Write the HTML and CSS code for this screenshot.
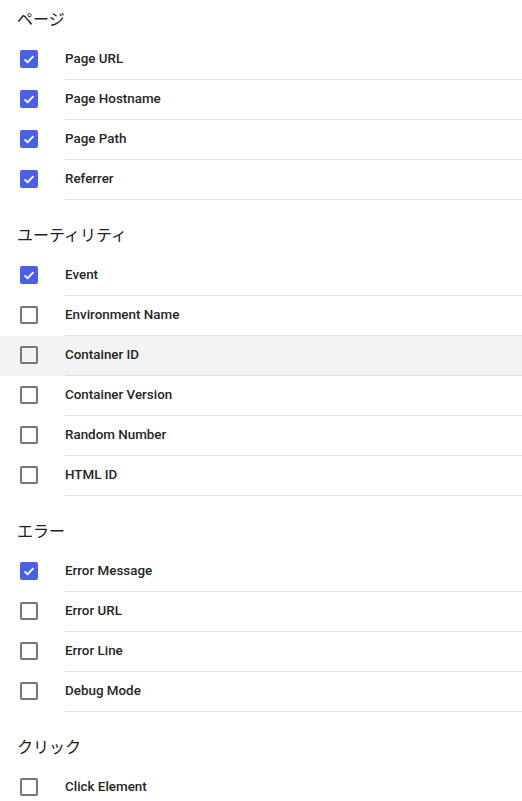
FILE: index.html
```html
<!DOCTYPE html>
<html lang="ja">
<head>
<meta charset="utf-8">
<link rel="stylesheet" href="styles.css">
</head>
<body>
<div class="list">
  <section class="group">
    <h2 class="group-title">ページ</h2>
    <div class="row"><span class="cb checked"><svg viewBox="0 0 18 18"><polyline points="4.5,9.3 7.6,12.2 13.5,6.2"/></svg></span><span class="label">Page URL</span></div>
    <div class="row"><span class="cb checked"><svg viewBox="0 0 18 18"><polyline points="4.5,9.3 7.6,12.2 13.5,6.2"/></svg></span><span class="label">Page Hostname</span></div>
    <div class="row"><span class="cb checked"><svg viewBox="0 0 18 18"><polyline points="4.5,9.3 7.6,12.2 13.5,6.2"/></svg></span><span class="label">Page Path</span></div>
    <div class="row"><span class="cb checked"><svg viewBox="0 0 18 18"><polyline points="4.5,9.3 7.6,12.2 13.5,6.2"/></svg></span><span class="label">Referrer</span></div>
  </section>
  <section class="group">
    <h2 class="group-title">ユーティリティ</h2>
    <div class="row"><span class="cb checked"><svg viewBox="0 0 18 18"><polyline points="4.5,9.3 7.6,12.2 13.5,6.2"/></svg></span><span class="label">Event</span></div>
    <div class="row"><span class="cb"></span><span class="label">Environment Name</span></div>
    <div class="row hover"><span class="cb"></span><span class="label">Container ID</span></div>
    <div class="row"><span class="cb"></span><span class="label">Container Version</span></div>
    <div class="row"><span class="cb"></span><span class="label">Random Number</span></div>
    <div class="row"><span class="cb"></span><span class="label">HTML ID</span></div>
  </section>
  <section class="group">
    <h2 class="group-title">エラー</h2>
    <div class="row"><span class="cb checked"><svg viewBox="0 0 18 18"><polyline points="4.5,9.3 7.6,12.2 13.5,6.2"/></svg></span><span class="label">Error Message</span></div>
    <div class="row"><span class="cb"></span><span class="label">Error URL</span></div>
    <div class="row"><span class="cb"></span><span class="label">Error Line</span></div>
    <div class="row"><span class="cb"></span><span class="label">Debug Mode</span></div>
  </section>
  <section class="group">
    <h2 class="group-title">クリック</h2>
    <div class="row"><span class="cb"></span><span class="label">Click Element</span></div>
  </section>
</div>
</body>
</html>
```

FILE: styles.css
```css
html, body {
  margin: 0;
  padding: 0;
  background: #ffffff;
}
body {
  font-family: Roboto, "Noto Sans CJK JP", sans-serif;
  color: #212121;
  overflow: hidden;
}
.list {
  display: flex;
  flex-direction: column;
}
.group + .group {
  margin-top: 16px;
}
.group-title {
  margin: 0;
  height: 40px;
  padding-left: 17px;
  box-sizing: border-box;
  font-family: "Noto Sans CJK JP", sans-serif;
  font-size: 16px;
  font-weight: 400;
  line-height: 36px;
  color: #212121;
}
.row {
  display: flex;
  align-items: stretch;
  height: 40px;
}
.row.hover {
  background: #f1f3f4;
}
.cb {
  flex: 0 0 auto;
  width: 18px;
  height: 18px;
  margin: 10px 27px 0 20px;
  box-sizing: border-box;
  border: 2px solid #767676;
  border-radius: 2px;
  display: flex;
  align-items: center;
  justify-content: center;
}
.cb.checked {
  background: #4d5fe4;
  border-color: #4d5fe4;
}
.cb svg {
  width: 18px;
  height: 18px;
  flex: 0 0 auto;
}
.cb polyline {
  fill: none;
  stroke: #ffffff;
  stroke-width: 1.8;
}
.label {
  flex: 1;
  display: flex;
  align-items: center;
  padding-bottom: 2px;
  border-bottom: 1px solid #e0e0e0;
  font-size: 13.4px;
  font-weight: 500;
  color: #262626;
}
```
